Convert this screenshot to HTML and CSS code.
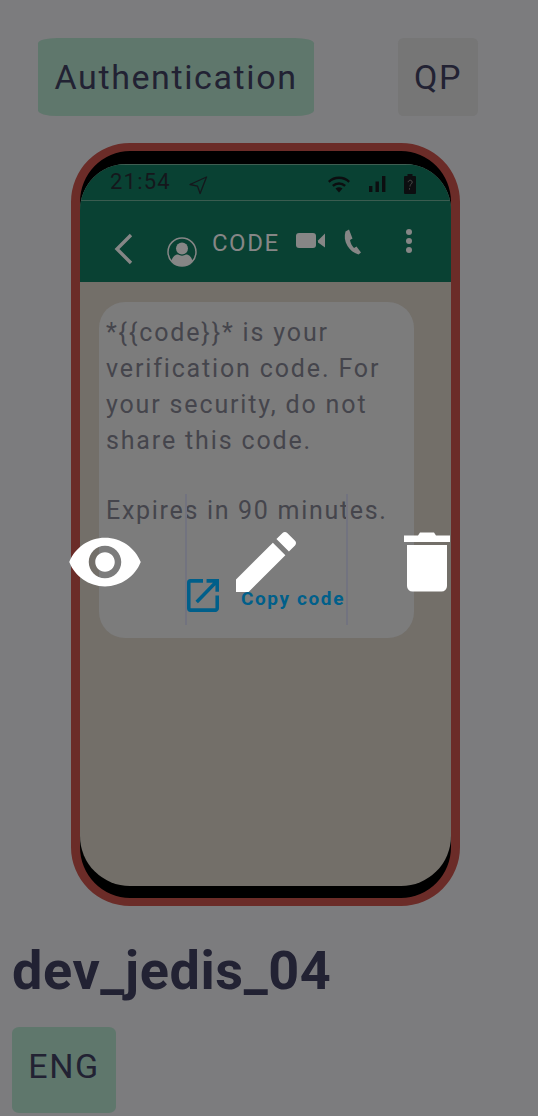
FILE: index.html
```html
<!DOCTYPE html>
<html lang="en">

<head>
    <meta charset="utf-8">
    <meta name="viewport" content="width=device-width, initial-scale=1.0">
    <title>dev_jedis_04</title>
    <link rel="stylesheet" href="styles.css">
</head>

<body>
    <section class="chips">
        <div class="chip chip_green">Authentication</div>
        <div class="chip chip_grey">QP</div>
    </section>

    <section class="phone">
        <div class="screen">
            <div class="topbar">
                <div class="status">
                    <span class="time">21:54</span>
                    <svg class="nav_icon" width="20" height="20" viewBox="0 0 20 20">
                        <path d="M18.5 2 2 9.5l7.5 1.6 2.6 7.4z" fill="none" stroke="#15171c" stroke-width="1.3" stroke-linejoin="round" />
                    </svg>
                    <svg class="wifi_icon" width="24" height="18" viewBox="0 0 24 18">
                        <path d="M1 6a16 16 0 0 1 22 0l-1.6 1.8a13.600 13.600 0 0 0-18.800 0z" fill="#0c0e10" />
                        <path d="M5 10a10.500 10.500 0 0 1 14 0l-1.700 1.800a8 8 0 0 0-10.600 0z" fill="#0c0e10" />
                        <path d="M8.500 13.600a5.500 5.500 0 0 1 7 0L12 17.500z" fill="#0c0e10" />
                    </svg>
                    <svg class="signal_icon" width="18" height="18" viewBox="0 0 18 18">
                        <rect x="1" y="11" width="3.400" height="6" fill="#0c0e10" />
                        <rect x="7.500" y="6.500" width="3.400" height="10.500" fill="#0c0e10" />
                        <rect x="14" y="1" width="3.400" height="16" fill="#0c0e10" />
                    </svg>
                    <svg class="battery_icon" width="12" height="20" viewBox="0 0 12 20">
                        <path d="M3.500 0h5v2H11a1 1 0 0 1 1 1v16a1 1 0 0 1-1 1H1a1 1 0 0 1-1-1V3a1 1 0 0 1 1-1h2.500z" fill="#0c0e10" />
                        <path d="M4.200 8.200a2 2 0 1 1 3.200 1.600c-.9.700-1.200 1.200-1.400 2.700M5.500 14.200v1.400" fill="none" stroke="#4a4a48" stroke-width="1" />
                    </svg>
                </div>
                <div class="chat_head">
                    <svg class="back_icon" width="20" height="32" viewBox="0 0 20 32">
                        <path d="M17 2 3 16l14 14" fill="none" stroke="#868686" stroke-width="3.400" />
                    </svg>
                    <svg class="avatar_icon" width="30" height="30" viewBox="0 0 30 30">
                        <circle cx="15" cy="15" r="14" fill="none" stroke="#868686" stroke-width="1.500" />
                        <circle cx="15" cy="11.500" r="6" fill="#868686" />
                        <path d="M4.500 24c1-4.500 4-6.500 6.500-6.500 2.500 1.500 5.500 1.500 8 0 2.500 0 5.500 2 6.500 6.500-2.500 3-6 5-10.500 5S7 27 4.500 24z" fill="#868686" />
                    </svg>
                    <span class="contact">CODE</span>
                    <svg class="video_icon" width="30" height="18" viewBox="0 0 30 18">
                        <rect x="0" y="1" width="20" height="15" rx="3" fill="#868686" />
                        <path d="M22 8.500 29 1.500v14l-7-5z" fill="#868686" />
                    </svg>
                    <svg class="phone_icon" width="18" height="26" viewBox="0 0 18 26">
                        <path d="M5 .500 1.500 2.500C.200 7 .500 12 3.500 17c2.500 4 6 7 11 8.500l2.500-2-4.500-6-2.500 1.500c-2-2-3.500-5-4-8l2.500-1.500z" fill="#868686" />
                    </svg>
                    <svg class="dots_icon" width="8" height="26" viewBox="0 0 8 26">
                        <circle cx="4" cy="4" r="3" fill="#868686" />
                        <circle cx="4" cy="13" r="3" fill="#868686" />
                        <circle cx="4" cy="22" r="3" fill="#868686" />
                    </svg>
                </div>
            </div>
            <div class="chat">
                <div class="bubble">
                    <p class="message">*{{code}}* is your verification code. For your security, do not share this code.</p>
                    <p class="message expires">Expires in 90 minutes.</p>
                    <div class="copy">
                        <svg width="32" height="33" viewBox="3 3 18 18" preserveAspectRatio="none">
                            <path d="M19 19H5V5h7V3H5a2 2 0 0 0-2 2v14a2 2 0 0 0 2 2h14c1.100 0 2-.9 2-2v-7h-2v7zM14 3v2h3.590l-9.830 9.830 1.410 1.410L19 6.410V10h2V3h-7z" fill="#005f8a" />
                        </svg>
                        <span>Copy code</span>
                    </div>
                </div>
            </div>
        </div>
    </section>

    <h1>dev_jedis_04</h1>
    <div class="chip chip_green chip_lang">ENG</div>

    <div class="line line_left"></div>
    <div class="line line_right"></div>

    <div class="actions">
        <svg class="eye" width="78" height="78" viewBox="0 0 24 24">
            <path d="M12 4.500C7 4.500 2.730 7.610 1 12c1.730 4.390 6 7.500 11 7.500s9.270-3.110 11-7.500c-1.730-4.390-6-7.500-11-7.500zM12 17c-2.760 0-5-2.240-5-5s2.240-5 5-5 5 2.240 5 5-2.240 5-5 5zm0-8c-1.660 0-3 1.340-3 3s1.340 3 3 3 3-1.340 3-3-1.340-3-3-3z" fill="#fff" />
        </svg>
        <svg class="pencil" width="80" height="80" viewBox="0 0 24 24">
            <path d="M3 17.250V21h3.750L17.810 9.940l-3.750-3.750L3 17.250zM20.710 7.040c.39-.39.39-1.020 0-1.410l-2.340-2.340c-.39-.39-1.020-.39-1.410 0l-1.830 1.830 3.750 3.750 1.830-1.830z" fill="#fff" />
        </svg>
        <svg class="trash" width="46" height="60" viewBox="0 0 46 60">
            <path d="M0 3.500h14L16 0.500h14l2 3h14v6.500H0z" fill="#fff" />
            <path d="M3 13h40v41a5.500 5.500 0 0 1-5.500 5.500h-29A5.500 5.500 0 0 1 3 54z" fill="#fff" />
        </svg>
    </div>
</body></html>
```

FILE: styles.css
```css
* {
    box-sizing: border-box;
}

body {
    position: relative;
    margin: 0;
    height: 1116px;
    overflow: hidden;
    padding: 38px 0 0 0;
    background-color: #7c7c7e;
    color: #222233;
    font-family: Roboto, sans-serif;
}

.chips {
    display: flex;
    justify-content: space-between;
    padding: 0 60px 0 38px;
}

.chip {
    height: 78px;
    display: flex;
    align-items: center;
    justify-content: center;
    font-size: 34px;
    letter-spacing: 1.6px;
    border-radius: 7%;
}

.chip_green {
    width: 276px;
    background-color: #5f776c;
}

.chip_grey {
    width: 80px;
    background-color: #767676;
}

.phone {
    width: 389px;
    height: 763px;
    margin: 27px 0 0 71px;
    padding: 13px 0 12px 0;
    border: 9px solid #6b2c28;
    border-top-width: 8px;
    border-bottom-width: 8px;
    border-radius: 59px;
    background-color: #000;
    overflow: hidden;
}

.screen {
    height: 100%;
    display: flex;
    flex-direction: column;
    border-radius: 46px 46px 50px 50px;
    overflow: hidden;
    background-color: #736f69;
}

.topbar {
    height: 118px;
    flex: none;
    border-top: 1px solid #3f5e52;
    background-color: #094133;
}

.status {
    height: 36px;
    display: flex;
    align-items: center;
    padding: 0 35px 0 30px;
    border-bottom: 1px solid #3a5c50;
}

.time {
    margin-top: -2px;
    font-size: 22px;
    letter-spacing: 1.2px;
    color: #15171c;
}

.nav_icon {
    margin: 4px 0 0 17px;
}

.wifi_icon {
    margin: 2px 0 0 auto;
}

.signal_icon {
    margin: 3px 0 0 17px;
}

.battery_icon {
    margin: 2px 0 0 18px;
}

.chat_head {
    position: relative;
    display: flex;
    align-items: flex-start;
    padding: 32px 0 0 34px;
    color: #868686;
}

.avatar_icon {
    margin: 4px 0 0 33px;
}

.contact {
    margin: -5px 0 0 15px;
    font-size: 24px;
    line-height: 30px;
    letter-spacing: 1.5px;
}

.video_icon {
    margin: -1px 0 0 16px;
}

.phone_icon {
    margin: -4px 0 0 18px;
}

.dots_icon {
    margin: -5px 0 0 43px;
}

.chat {
    padding: 20px 0 0 19px;
}

.bubble {
    width: 315px;
    height: 336px;
    padding: 13px 0 0 7px;
    border-radius: 26px;
    background-color: #7c7c7c;
}

.message {
    margin: 0;
    width: 290px;
    font-size: 25px;
    line-height: 36px;
    letter-spacing: 1.85px;
    color: #45454c;
}

.expires {
    margin-top: 34px;
    white-space: nowrap;
    letter-spacing: 1.7px;
}

.copy {
    display: flex;
    align-items: center;
    margin: 50px 0 0 81px;
    font-size: 19px;
    font-weight: 700;
    letter-spacing: 1.6px;
    color: #005f8a;
}

.copy span {
    margin: 6px 0 0 22px;
}

h1 {
    margin: 35px 0 0 12px;
    font-size: 54px;
    line-height: 60px;
    font-weight: 700;
    letter-spacing: 0.6px;
}

.chip_lang {
    width: 104px;
    height: 86px;
    margin: 26px 0 0 12px;
    padding: 0 0 8px 0;
}

.line {
    position: absolute;
    top: 494px;
    width: 2px;
    height: 131px;
    background-color: #72737f;
}

.line_left {
    left: 185px;
}

.line_right {
    left: 346px;
}

.actions {
    position: absolute;
    top: 532px;
    left: 0;
    width: 100%;
    height: 60px;
}

.actions svg {
    position: absolute;
    display: block;
}

.eye {
    left: 66px;
    top: -9px;
}

.pencil {
    left: 226px;
    top: -10px;
}

.trash {
    left: 404px;
    top: 0;
}
```
